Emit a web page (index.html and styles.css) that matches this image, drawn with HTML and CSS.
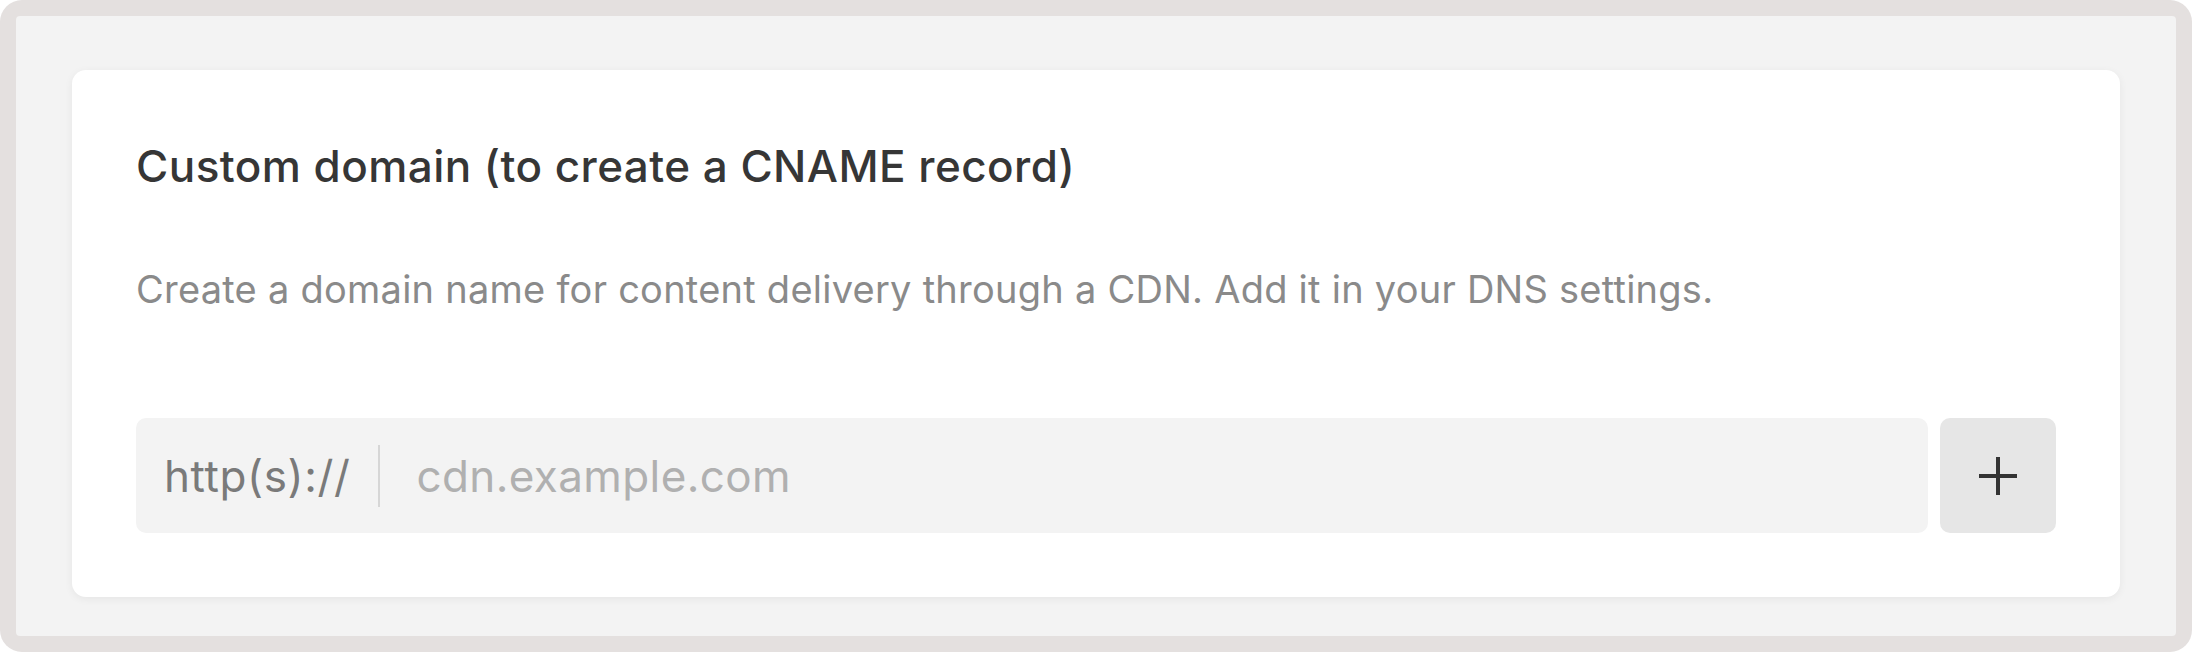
FILE: index.html
```html
<!DOCTYPE html>
<html lang="en">
<head>
<meta charset="utf-8">
<title>Custom domain</title>
<link rel="stylesheet" href="styles.css">
</head>
<body>
<div class="frame">
  <div class="panel">
    <section class="card">
      <h2 class="title">Custom domain (to create a CNAME record)</h2>
      <p class="desc">Create a domain name for content delivery through a CDN. Add it in your DNS settings.</p>
      <div class="row">
        <label class="field">
          <span class="prefix">http(s)://</span>
          <span class="sep"></span>
          <input class="input" type="text" placeholder="cdn.example.com">
        </label>
        <button class="add" type="button" aria-label="Add">
          <svg width="40" height="40" viewBox="0 0 40 40"><path d="M20 1V39M1 20H39" stroke="#333" stroke-width="4" fill="none"/></svg>
        </button>
      </div>
    </section>
  </div>
</div>
</body>
</html>
```

FILE: styles.css
```css
* { box-sizing: border-box; }
html, body { margin: 0; padding: 0; background: #ffffff; }
body { font-family: Inter, "Noto Sans", sans-serif; }
.frame {
  width: 2192px;
  height: 652px;
  background: #e4e0df;
  border-radius: 22px;
  padding: 16px;
}
.panel {
  height: 100%;
  background: #f3f3f3;
  border-radius: 4px;
  padding: 54px 56px 39px 56px;
}
.card {
  background: #ffffff;
  border-radius: 14px;
  box-shadow: 0 2px 8px rgba(0,0,0,0.06);
  padding: 64px 64px 64px 64px;
  display: flex;
  flex-direction: column;
}
.title {
  margin: 0;
  font-size: 44px;
  line-height: 64px;
  font-weight: 500;
  letter-spacing: 0.45px;
  color: #363636;
}
.desc {
  margin: 63px 0 0 0;
  font-size: 38px;
  line-height: 56px;
  font-weight: 400;
  letter-spacing: 0.25px;
  color: #8a8a8a;
}
.row {
  margin-top: 101px;
  display: flex;
  gap: 12px;
  height: 115px;
}
.field {
  flex: 1;
  display: flex;
  align-items: center;
  background: #f3f3f3;
  border-radius: 10px;
  padding: 0 28px;
}
.prefix {
  font-size: 44px;
  letter-spacing: 0.6px;
  color: #7a7a7a;
  white-space: nowrap;
}
.sep {
  width: 2px;
  height: 62px;
  background: #d6d6d6;
  margin: 0 36px 0 28px;
}
.input {
  flex: 1;
  border: 0;
  outline: none;
  background: transparent;
  font-family: inherit;
  font-size: 44px;
  letter-spacing: 0.4px;
  color: #333;
  padding: 0;
}
.input::placeholder { color: #b0b0b0; }
.add {
  width: 116px;
  height: 115px;
  border: 0;
  border-radius: 10px;
  background: #e6e6e6;
  display: flex;
  align-items: center;
  justify-content: center;
  padding: 0;
}
```
